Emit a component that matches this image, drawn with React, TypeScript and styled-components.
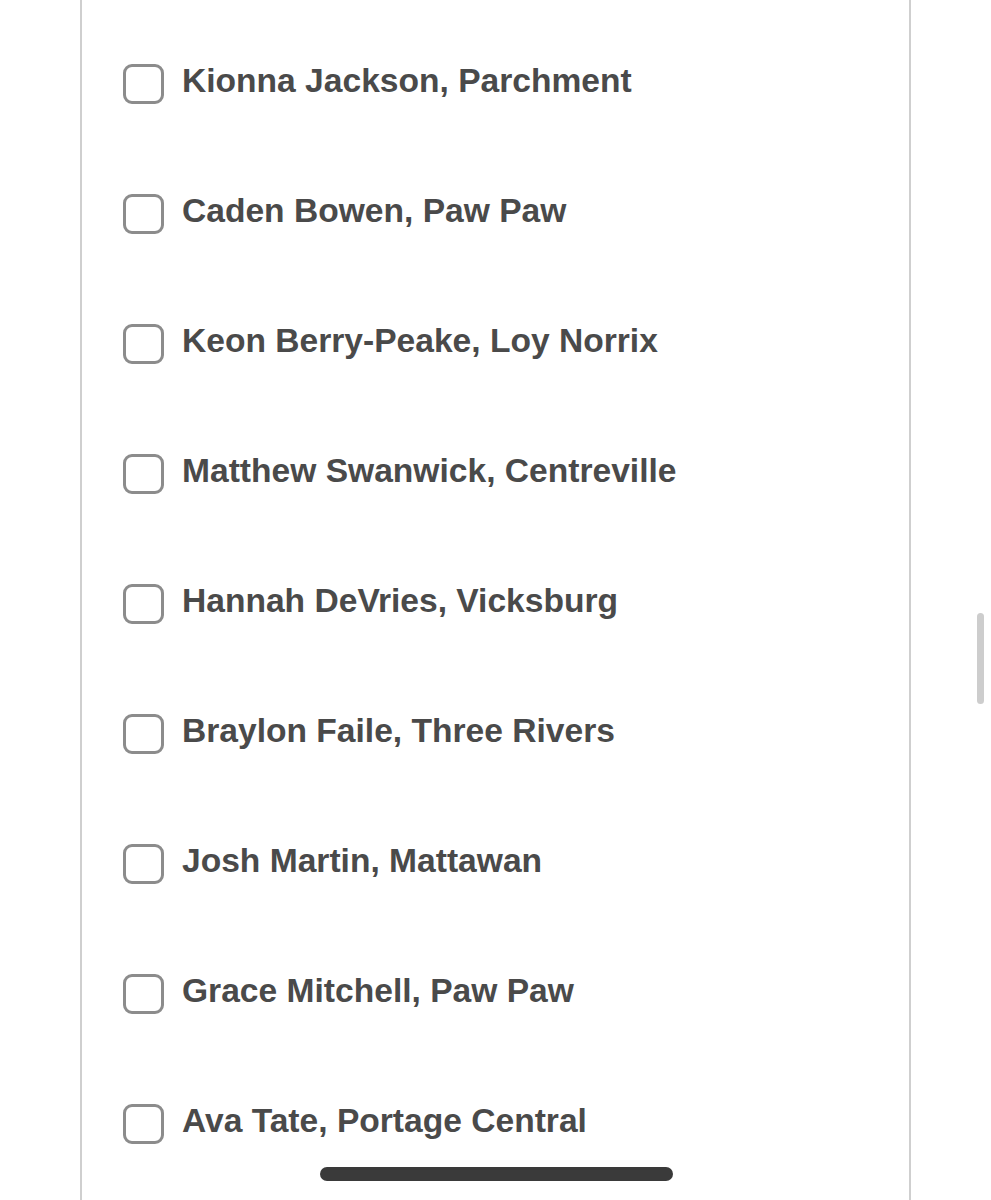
import styled, { createGlobalStyle } from 'styled-components';

const GlobalStyle = createGlobalStyle`
  html, body {
    margin: 0;
    padding: 0;
    background: #ffffff;
  }
`;

const Screen = styled.div`
  position: relative;
  width: 991px;
  height: 1200px;
  overflow: hidden;
  background: #ffffff;
  font-family: "Liberation Sans", Arial, Helvetica, sans-serif;
`;

const Card = styled.div`
  margin-left: 80px;
  width: 827px;
  height: 100%;
  box-sizing: content-box;
  border-left: 2px solid #cfcfcf;
  border-right: 2px solid #cfcfcf;
`;

const List = styled.ul`
  list-style: none;
  margin: 0;
  padding: 64px 0 0 41px;
  display: flex;
  flex-direction: column;
  gap: 90px;
`;

const Row = styled.li`
  display: flex;
  align-items: center;
  gap: 18px;
  height: 40px;
`;

const Box = styled.span`
  flex: none;
  width: 41px;
  height: 40px;
  box-sizing: border-box;
  border: 3px solid #8c8c8c;
  border-radius: 9px;
  background: #ffffff;
`;

const Label = styled.span`
  font-size: 33.6px;
  font-weight: 700;
  color: #4a4a4a;
  white-space: nowrap;
  margin-bottom: 6px;
`;

const ScrollThumb = styled.div`
  position: absolute;
  left: 977px;
  top: 613px;
  width: 7px;
  height: 91px;
  border-radius: 4px;
  background: #cdcdcd;
`;

const HomeIndicator = styled.div`
  position: absolute;
  left: 320px;
  top: 1167px;
  width: 353px;
  height: 14px;
  border-radius: 7px;
  background: #3a3a3a;
`;

const athletes = [
  'Kionna Jackson, Parchment',
  'Caden Bowen, Paw Paw',
  'Keon Berry-Peake, Loy Norrix',
  'Matthew Swanwick, Centreville',
  'Hannah DeVries, Vicksburg',
  'Braylon Faile, Three Rivers',
  'Josh Martin, Mattawan',
  'Grace Mitchell, Paw Paw',
  'Ava Tate, Portage Central',
];

export default function App() {
  return (
    <Screen>
      <GlobalStyle />
      <Card>
        <List>
          {athletes.map((name) => (
            <Row key={name}>
              <Box />
              <Label>{name}</Label>
            </Row>
          ))}
        </List>
      </Card>
      <ScrollThumb />
      <HomeIndicator />
    </Screen>
  );
}
